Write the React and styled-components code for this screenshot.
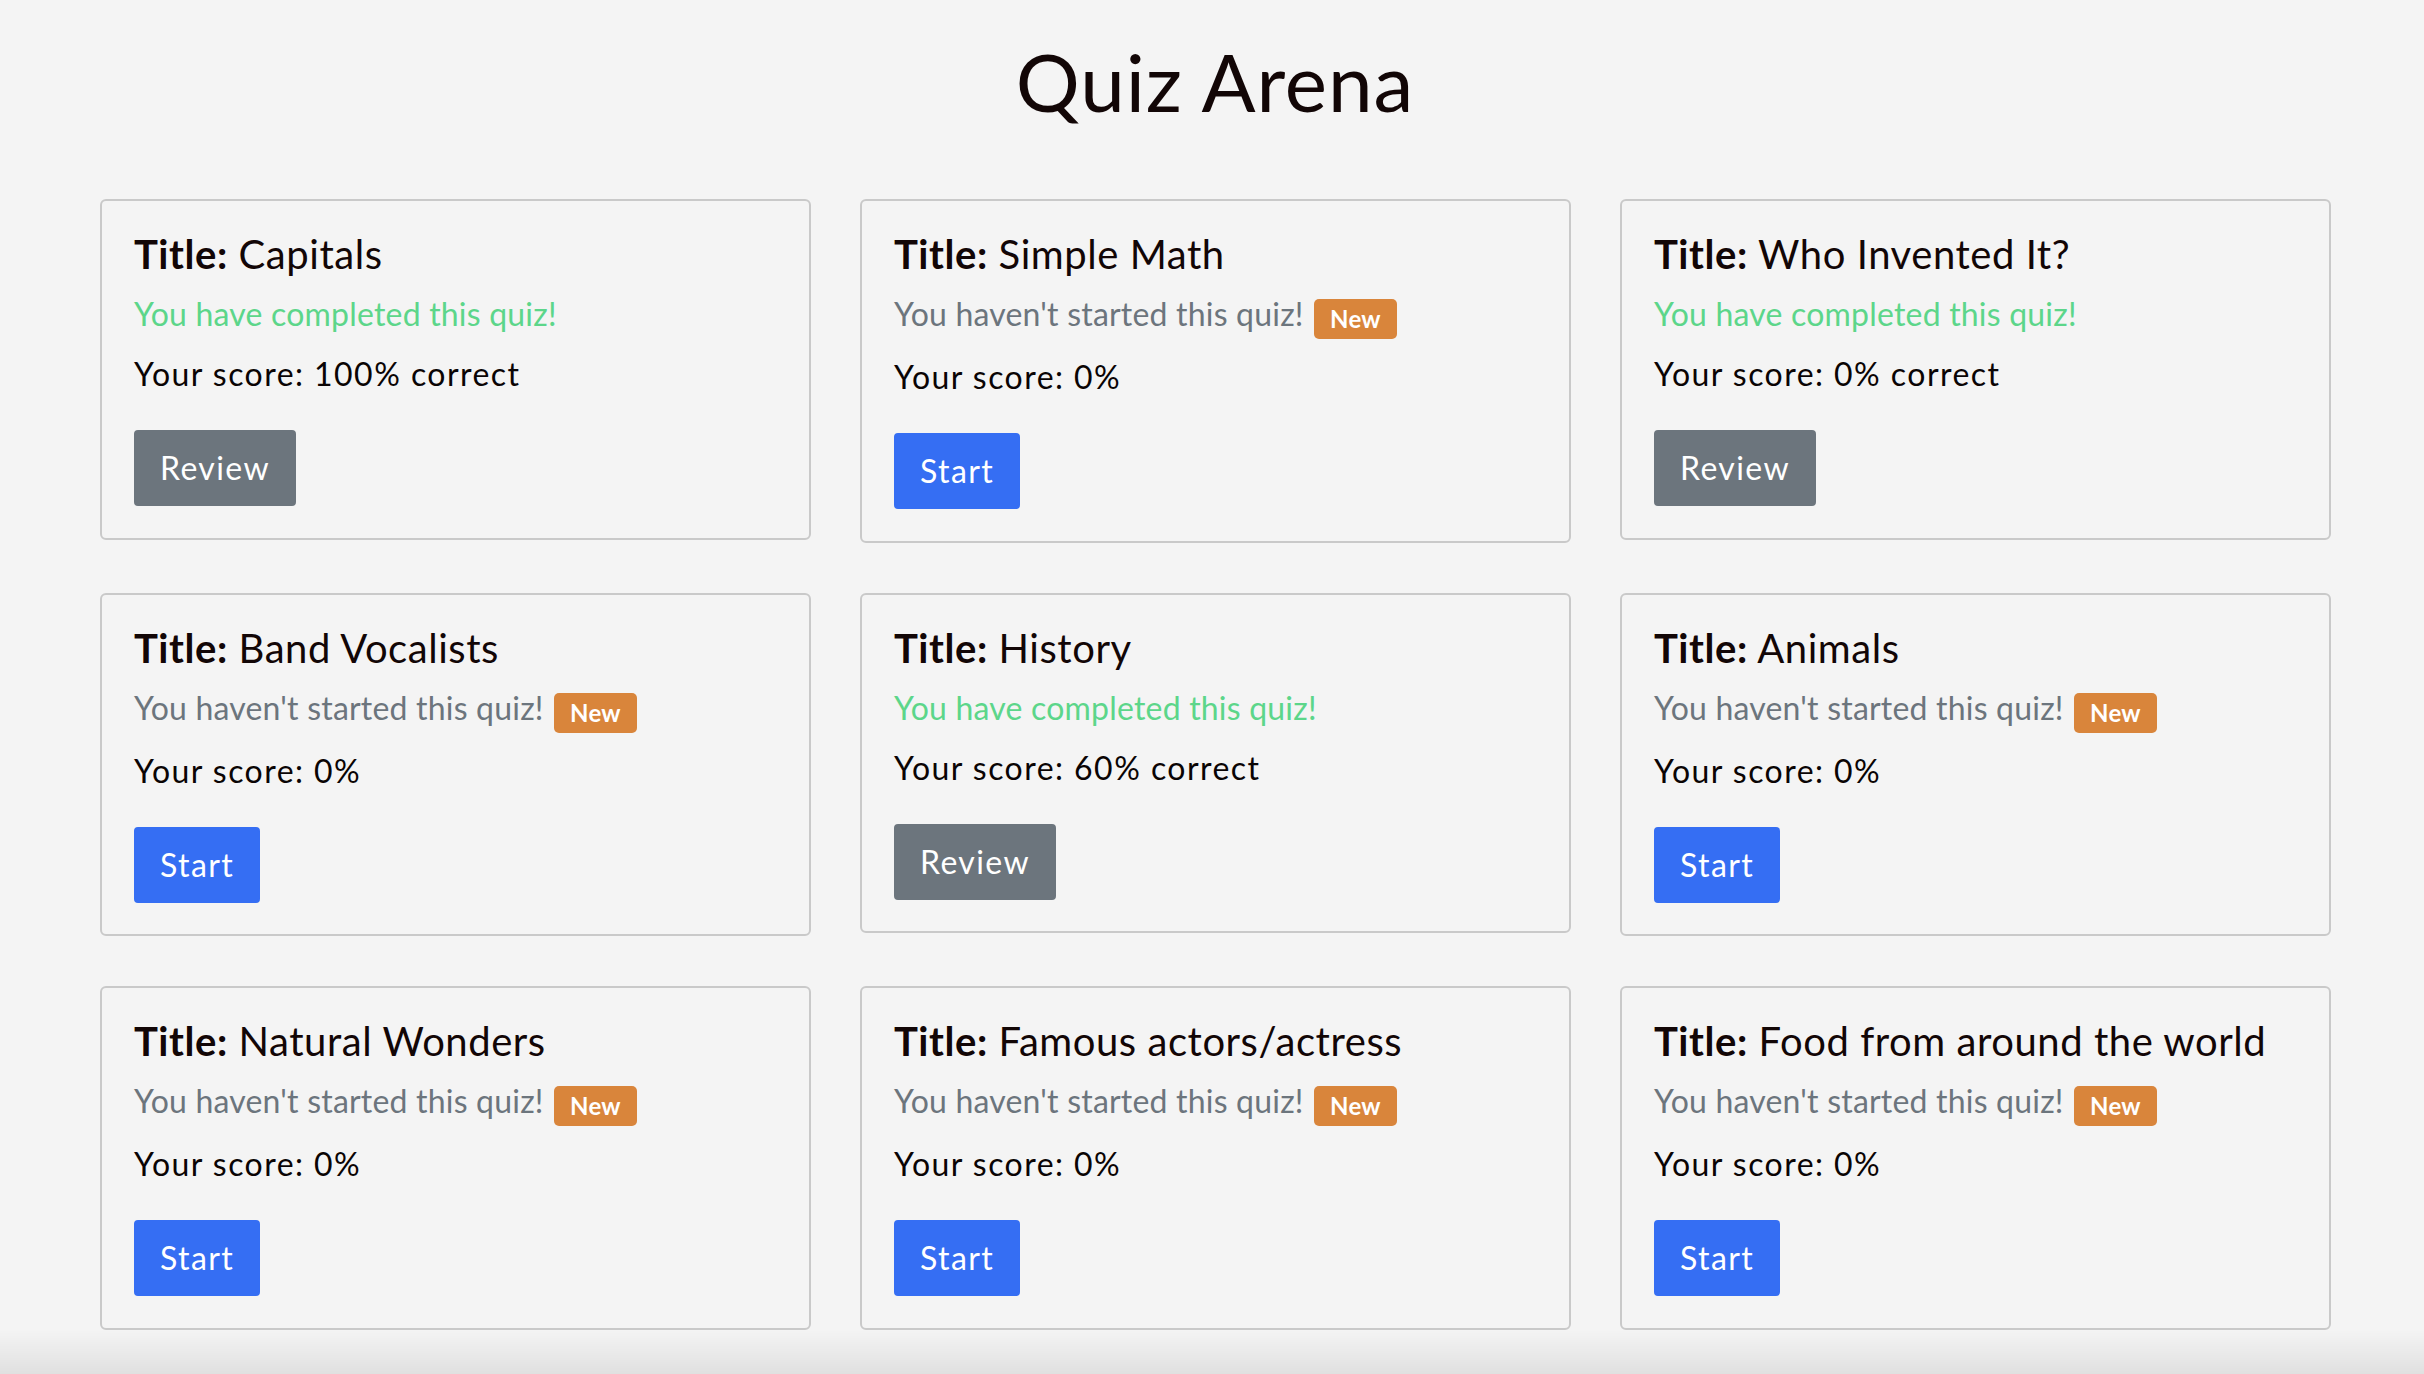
import * as React from 'react';
import styled, { createGlobalStyle } from 'styled-components';

const GlobalStyle = createGlobalStyle`
  html, body {
    margin: 0;
    padding: 0;
    background: #f4f4f4;
  }
  body {
    font-family: Lato, "Noto Sans", sans-serif;
    color: #120606;
  }
`;

const Page = styled.main`
  min-height: 1374px;
  box-sizing: border-box;
  padding: 33px 0 40px 100px;
`;

const Heading = styled.h1`
  margin: 0 0 70px;
  padding-right: 94px;
  font-size: 80px;
  line-height: 96px;
  font-weight: 400;
  letter-spacing: 0.9px;
  text-align: center;
`;

const Grid = styled.section`
  display: grid;
  grid-template-columns: repeat(3, 711px);
  column-gap: 49px;
  row-gap: 50px;
  align-items: start;
`;

const Card = styled.article`
  border: 2px solid #c9c9c9;
  border-radius: 6px;
  padding: 29px 32px 31.5px;
`;

const Title = styled.h5`
  margin: 0;
  font-size: 40px;
  line-height: 48px;
  font-weight: 400;
  letter-spacing: 0.55px;
  b {
    font-weight: 700;
  }
`;

const Status = styled.p`
  margin: 12px 0 0;
  font-size: 32px;
  line-height: 48px;
  letter-spacing: 0.2px;
  color: ${({ done }) => (done ? '#5cd68a' : '#6c757d')};
`;

const Badge = styled.span`
  display: inline-block;
  margin: 0 0 2px 2px;
  padding: 8px 16px;
  font-size: 24px;
  line-height: 24px;
  font-weight: 700;
  letter-spacing: 0.3px;
  color: #fff;
  background: #d9853b;
  border-radius: 5px;
  vertical-align: -2px;
`;

const Score = styled.p`
  margin: 12px 0 0;
  font-size: 32px;
  line-height: 48px;
  letter-spacing: 1.45px;
  color: #0a0404;
`;

const Button = styled.button`
  display: inline-block;
  margin-top: 32px;
  padding: 12px 24px;
  border: 2px solid ${({ review }) => (review ? '#6c757d' : '#356ef3')};
  border-radius: 4px;
  background: ${({ review }) => (review ? '#6c757d' : '#356ef3')};
  color: #fff;
  font-family: inherit;
  font-size: 32px;
  line-height: 48px;
  letter-spacing: 1.4px;
  cursor: pointer;
`;

const Fade = styled.div`
  position: fixed;
  left: 0;
  right: 0;
  bottom: 0;
  height: 44px;
  pointer-events: none;
  background: linear-gradient(rgba(0, 0, 0, 0), rgba(0, 0, 0, 0.08));
`;

const quizzes = [
  { title: 'Capitals', done: true, score: 100 },
  { title: 'Simple Math', done: false, score: 0 },
  { title: 'Who Invented It?', done: true, score: 0 },
  { title: 'Band Vocalists', done: false, score: 0 },
  { title: 'History', done: true, score: 60 },
  { title: 'Animals', done: false, score: 0 },
  { title: 'Natural Wonders', done: false, score: 0 },
  { title: 'Famous actors/actress', done: false, score: 0 },
  { title: 'Food from around the world', done: false, score: 0 },
];

function QuizCard({ title, done, score }) {
  return (
    <Card>
      <Title>
        <b>Title:</b> {title}
      </Title>
      {done ? (
        <Status done>You have completed this quiz!</Status>
      ) : (
        <Status>
          You haven't started this quiz! <Badge>New</Badge>
        </Status>
      )}
      <Score>
        Your score: {score}%{done ? ' correct' : ''}
      </Score>
      <Button review={done}>{done ? 'Review' : 'Start'}</Button>
    </Card>
  );
}

export default function App() {
  return (
    <>
      <GlobalStyle />
      <Page>
        <Heading>Quiz Arena</Heading>
        <Grid>
          {quizzes.map((q) => (
            <QuizCard key={q.title} {...q} />
          ))}
        </Grid>
      </Page>
      <Fade />
    </>
  );
}
